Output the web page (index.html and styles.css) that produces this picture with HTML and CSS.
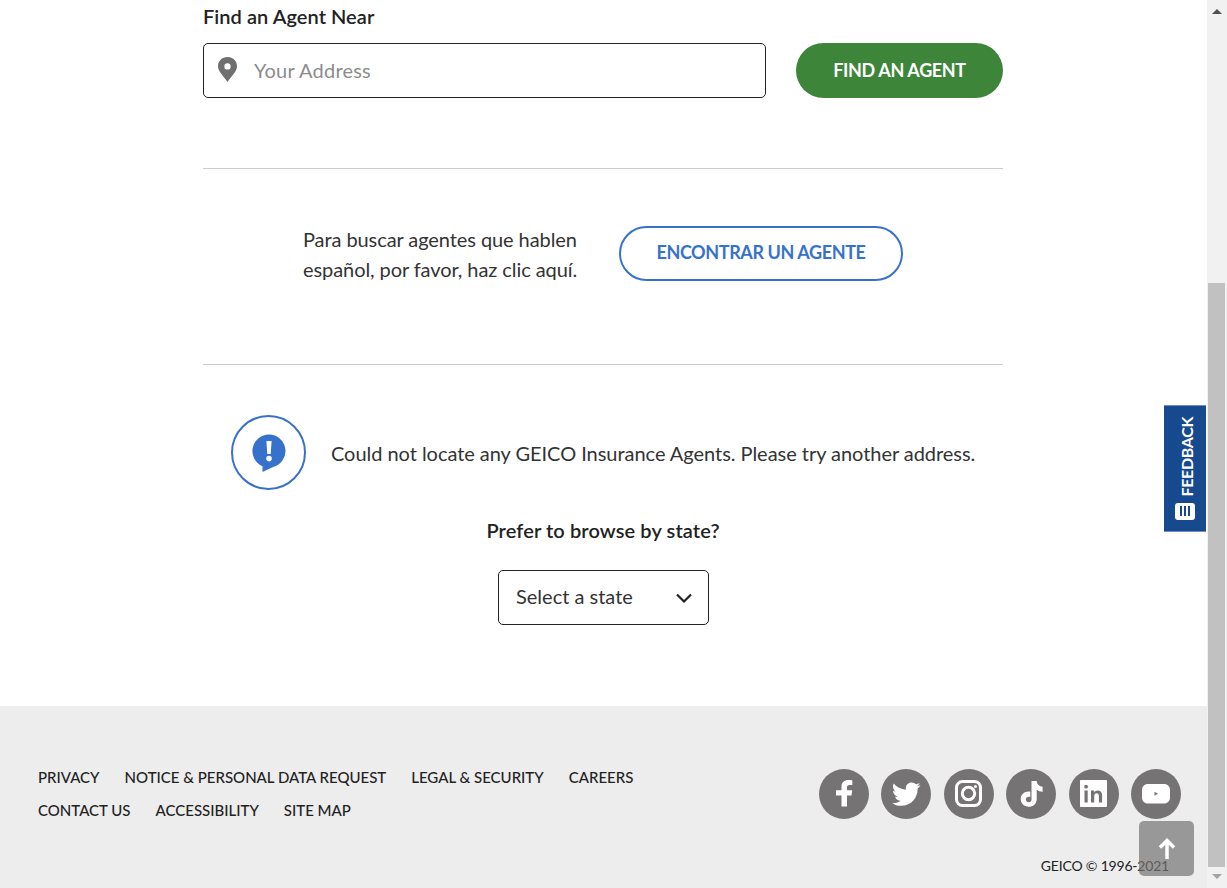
FILE: index.html
```html
<!DOCTYPE html>
<html lang="en">
<head>
    <meta charset="UTF-8">
    <meta name="viewport" content="width=device-width, initial-scale=1.0">
    <title>Find an Agent</title>
    <link rel="stylesheet" href="styles.css">
</head>
<body>

    <div class="page">
        <main class="content">
            <form class="search">
                <label class="search-label" for="address">Find an Agent Near</label>
                <div class="search-row">
                    <div class="address-box">
                        <svg class="pin" viewBox="1 0.5 18 23.5" width="19" height="25">
                            <path fill-rule="evenodd" fill="#6f6f6f" d="M10 0.5C4.700 0.500 1 4.400 1 9.200c0 5 5.300 9.300 9 14.800 3.700-5.500 9-9.800 9-14.800C19 4.400 15.300 0.500 10 0.500zM10 6.300a3 3 0 1 1 0 6 3 3 0 0 1 0-6z"/>
                        </svg>
                        <input class="address-input" type="text" id="address" placeholder="Your Address">
                    </div>
                    <button class="btn-green" type="button">FIND AN AGENT</button>
                </div>
            </form>

            <div class="spanish">
                <p class="spanish-text">Para buscar agentes que hablen<br>español, por favor, haz clic aquí.</p>
                <a class="btn-outline" href="#">ENCONTRAR UN AGENTE</a>
            </div>

            <div class="results">
                <div class="notice">
                    <span class="notice-icon">
                        <svg viewBox="0 0 34 38" width="34" height="38">
                            <path fill="#3672cc" d="M17 0.500a16.500 16.500 0 0 1 4 32.500L10.500 38V32.200A16.500 16.500 0 0 1 17 0.500z"/>
                            <path fill="#fff" d="M14.400 7h5.200l-0.900 13h-3.400zM17 21.800a2.800 2.800 0 1 1 0 5.600 2.800 2.800 0 0 1 0-5.600z"/>
                        </svg>
                    </span>
                    <p class="notice-text">Could not locate any GEICO Insurance Agents. Please try another address.</p>
                </div>
                <h3 class="browse-title">Prefer to browse by state?</h3>
                <div class="state-select">
                    <span class="state-value">Select a state</span>
                    <svg viewBox="0 0 16 10" width="16" height="10">
                        <path d="M1 1.500L8 8.500l7-7" fill="none" stroke="#222" stroke-width="2.200"/>
                    </svg>
                </div>
            </div>

            <footer class="footer">
                <nav class="footer-links">
                    <div class="link-row">
                        <a href="#">PRIVACY</a>
                        <a href="#">NOTICE &amp; PERSONAL DATA REQUEST</a>
                        <a href="#">LEGAL &amp; SECURITY</a>
                        <a href="#">CAREERS</a>
                    </div>
                    <div class="link-row">
                        <a href="#">CONTACT US</a>
                        <a href="#">ACCESSIBILITY</a>
                        <a href="#">SITE MAP</a>
                    </div>
                </nav>
                <div class="footer-side">
                    <div class="social">
                        <a class="social-icon" href="#">
                            <svg viewBox="0 0 50 50" width="50" height="50"><path fill="#fff" d="M28 37.500V26.500h4.500l0.700-5.200H28v-3c0-1.500 0.600-2.400 2.500-2.400h2.800v-4.600c-0.800-0.100-2.200-0.300-3.900-0.300-3.900 0-6.900 2.300-6.900 6.600v3.700H17v5.200h5.500v11z"/></svg>
                        </a>
                        <a class="social-icon" href="#">
                            <svg viewBox="0 0 24 24" width="30" height="30"><path fill="#fff" d="M23.500 4.900c-.8.400-1.800.6-2.700.8 1-.6 1.700-1.500 2.100-2.600-.9.500-1.900.9-3 1.100-.9-.9-2.100-1.500-3.400-1.500-2.600 0-4.700 2.100-4.700 4.700 0 .4 0 .7.100 1.100-3.900-.2-7.400-2.100-9.700-4.900-.4.700-.6 1.500-.6 2.400 0 1.600.8 3.100 2.100 3.900-.8 0-1.500-.2-2.100-.6v.1c0 2.300 1.600 4.200 3.800 4.600-.4.100-.8.200-1.200.2-.3 0-.6 0-.9-.1.600 1.900 2.300 3.200 4.400 3.300-1.600 1.300-3.600 2-5.800 2-.4 0-.8 0-1.100-.1 2.100 1.300 4.500 2.100 7.200 2.100 8.600 0 13.300-7.100 13.300-13.300v-.6c.9-.7 1.700-1.500 2.300-2.500z"/></svg>
                        </a>
                        <a class="social-icon" href="#">
                            <svg viewBox="0 0 50 50" width="50" height="50">
                                <rect x="12.500" y="12.500" width="24" height="24" rx="6" fill="none" stroke="#fff" stroke-width="3"/>
                                <circle cx="24.500" cy="24.500" r="6.200" fill="none" stroke="#fff" stroke-width="3"/>
                                <circle cx="31.500" cy="17.500" r="1.500" fill="#fff"/>
                            </svg>
                        </a>
                        <a class="social-icon" href="#">
                            <svg viewBox="0 0 50 50" width="50" height="50"><path fill="#fff" d="M25.500 12h5.100c.3 3.200 2.600 5.400 6 5.700v5c-2.300 0-4.300-.7-5.900-1.900v9.100c0 4.900-3.700 7.900-8 7.900-4.500 0-8-3.300-8-7.700 0-4.700 4.200-8.300 9.600-7.400v5.200c-2.500-.8-4.500.5-4.500 2.500 0 1.600 1.300 2.800 3 2.800 1.800 0 3.100-1.200 2.700-3.600z"/></svg>
                        </a>
                        <a class="social-icon" href="#">
                            <svg viewBox="0 0 50 50" width="50" height="50">
                                <path fill="#fff" fill-rule="evenodd" d="M12 11h25c.6 0 1 .4 1 1v25c0 .6-.4 1-1 1H12c-.6 0-1-.4-1-1V12c0-.6.400-1 1-1zM15.500 21.500v12h3.200v-12zM17.100 15.800a1.900 1.900 0 1 0 0 3.800 1.900 1.900 0 0 0 0-3.800zM22 21.500v12h3.200v-6.400c0-1.800 1-2.900 2.500-2.900s2.200 1 2.200 2.900v6.400h3.200v-7.200c0-3.100-1.700-4.900-4.200-4.900-1.700 0-2.900.7-3.700 2v-1.900z"/>
                            </svg>
                        </a>
                        <a class="social-icon" href="#">
                            <svg viewBox="0 0 50 50" width="50" height="50">
                                <path fill="#fff" fill-rule="evenodd" d="M17 15h16c3.600 0 6 2.400 6 6v7.500c0 3.600-2.400 6-6 6H17c-3.600 0-6-2.400-6-6V21c0-3.600 2.400-6 6-6zM23.500 22.800v4l3.500-2z"/>
                            </svg>
                        </a>
                    </div>
                    <p class="copyright">GEICO © 1996-2021</p>
                </div>
                <a class="back-top" href="#">
                    <svg viewBox="0 0 18 22" width="18" height="22">
                        <path d="M9 21V2.500M2 9.500l7-7 7 7" fill="none" stroke="#fff" stroke-width="3.500"/>
                    </svg>
                </a>
            </footer>

            <a class="feedback" href="#">
                <span class="feedback-label">FEEDBACK</span>
                <span class="feedback-icon"><i></i><i></i><i></i></span>
            </a>
        </main>

        <div class="scrollbar">
            <div class="scroll-up"></div>
            <div class="scroll-track"><div class="scroll-thumb"></div></div>
            <div class="scroll-down"></div>
        </div>
    </div>

</body>
</html>
```
FILE: styles.css
```css
html, body {
    margin: 0;
    padding: 0;
    height: 100%;
    overflow: hidden;
}
body {
    background-color: #fff;
    color: #333;
    font-family: Lato, 'Liberation Sans', sans-serif;
}
.page {
    display: flex;
    height: 888px;
}
.content {
    position: relative;
    flex: 1;
    display: flex;
    flex-direction: column;
}

/* search */
.search {
    width: 800px;
    height: 169px;
    box-sizing: border-box;
    margin-left: 203px;
    border-bottom: 1px solid #ccc;
    padding-top: 4px;
}
.search-label {
    display: block;
    font-size: 20px;
    font-weight: 600;
    line-height: 24px;
    letter-spacing: 0.05px;
    color: #222;
    margin-bottom: 15px;
}
.search-row {
    display: flex;
    justify-content: space-between;
}
.address-box {
    display: flex;
    align-items: center;
    width: 563px;
    height: 55px;
    box-sizing: border-box;
    border: 1px solid #222;
    border-radius: 5px;
    padding-left: 14px;
}
.pin {
    margin-right: 17px;
    margin-top: -2px;
}
.address-input {
    flex: 1;
    border: none;
    outline: none;
    padding: 0 0 2px;
    font-family: inherit;
    font-size: 20px;
    letter-spacing: 0.2px;
    color: #222;
}
.address-input::placeholder {
    color: #8c8c8c;
    opacity: 1;
}
.btn-green {
    width: 207px;
    height: 55px;
    border: none;
    border-radius: 28px;
    background-color: #3d8539;
    color: #fff;
    font-family: inherit;
    font-size: 18px;
    font-weight: 700;
    letter-spacing: -0.35px;
    padding: 0 0 2px;
    cursor: pointer;
}

/* spanish row */
.spanish {
    width: 800px;
    height: 196px;
    box-sizing: border-box;
    margin-left: 203px;
    border-bottom: 1px solid #ccc;
    display: flex;
    align-items: flex-start;
    padding: 57px 0 0 100px;
}
.spanish-text {
    width: 274px;
    margin: -2px 42px 0 0;
    font-size: 20px;
    line-height: 30px;
    letter-spacing: -0.08px;
    white-space: nowrap;
}
.btn-outline {
    display: flex;
    align-items: center;
    justify-content: center;
    width: 284px;
    height: 55px;
    box-sizing: border-box;
    border: 2px solid #3672cc;
    border-radius: 28px;
    padding-bottom: 4px;
    color: #3672cc;
    font-size: 18px;
    font-weight: 700;
    letter-spacing: -0.4px;
    text-decoration: none;
}

/* results */
.results {
    flex: 1;
    display: flex;
    flex-direction: column;
    align-items: center;
    padding-top: 50px;
    padding-right: 1px;
}
.notice {
    display: flex;
    align-items: center;
    width: 800px;
    box-sizing: border-box;
    padding-left: 28px;
}
.notice-icon {
    display: flex;
    align-items: center;
    justify-content: center;
    width: 75px;
    height: 75px;
    box-sizing: border-box;
    border: 2px solid #3672cc;
    border-radius: 50%;
    margin-right: 25px;
    flex-shrink: 0;
}
.notice-text {
    margin: 0;
    font-size: 20px;
    letter-spacing: -0.04px;
    white-space: nowrap;
}
.browse-title {
    margin: 25px 0 0;
    font-size: 20px;
    font-weight: 600;
    line-height: 30px;
    letter-spacing: 0.1px;
    color: #222;
}
.state-select {
    display: flex;
    align-items: center;
    justify-content: space-between;
    width: 211px;
    height: 55px;
    box-sizing: border-box;
    border: 1px solid #222;
    border-radius: 5px;
    padding: 0 16px 0 17px;
    margin-top: 25px;
    margin-left: 1px;
    font-size: 20px;
}
.state-value {
    margin-bottom: 3px;
}

/* footer */
.footer {
    position: relative;
    height: 182px;
    box-sizing: border-box;
    background-color: #ededed;
    display: flex;
    justify-content: space-between;
    padding: 54px 26px 0 38px;
}
.link-row {
    display: flex;
    gap: 25px;
    height: 33px;
    align-items: center;
}
.link-row a {
    color: #222;
    font-size: 15px;
    font-weight: 500;
    text-decoration: none;
}
.footer-side {
    display: flex;
    flex-direction: column;
    align-items: flex-end;
    padding-top: 9px;
}
.social {
    display: flex;
    gap: 12.4px;
}
.social-icon {
    display: flex;
    align-items: center;
    justify-content: center;
    width: 50px;
    height: 50px;
    border-radius: 50%;
    background-color: #757373;
}
.copyright {
    margin: 38px 12px 0 0;
    font-size: 14px;
    line-height: 18px;
    letter-spacing: -0.2px;
    color: #222;
}
.back-top {
    position: absolute;
    left: 1139px;
    top: 115px;
    width: 55px;
    height: 55px;
    border-radius: 5px;
    background-color: rgba(117, 115, 115, 0.7);
    display: flex;
    align-items: center;
    justify-content: center;
}

/* feedback tab */
.feedback {
    position: absolute;
    right: 1px;
    top: 405px;
    width: 42px;
    height: 127px;
    box-sizing: border-box;
    border-top: 1px solid #6d8fbd;
    border-bottom: 1px solid #6d8fbd;
    background-color: #17498f;
    display: flex;
    flex-direction: column;
    align-items: center;
    color: #fff;
    text-decoration: none;
}
.feedback-label {
    writing-mode: vertical-rl;
    transform: rotate(180deg);
    font-size: 16px;
    font-weight: 700;
    line-height: 20px;
    letter-spacing: -0.35px;
    margin: 11px 0 0 3px;
}
.feedback-icon {
    display: flex;
    justify-content: center;
    align-items: center;
    gap: 2px;
    width: 20px;
    height: 17px;
    margin-top: 6px;
    background-color: #fff;
    border-radius: 3px;
}
.feedback-icon i {
    display: block;
    width: 2px;
    height: 10px;
    background-color: #17498f;
}

/* scrollbar */
.scrollbar {
    width: 20px;
    background-color: #f1f1f1;
    display: flex;
    flex-direction: column;
}
.scroll-up, .scroll-down {
    display: flex;
    justify-content: center;
    box-sizing: border-box;
}
.scroll-up {
    height: 22px;
    padding-top: 9px;
}
.scroll-down {
    height: 21px;
    padding-top: 7px;
}
.scroll-down::after {
    content: "";
    height: 0;
    border-left: 5px solid transparent;
    border-right: 5px solid transparent;
    border-top: 5px solid #a3a3a3;
}
.scroll-up::after {
    content: "";
    height: 0;
    border-left: 5px solid transparent;
    border-right: 5px solid transparent;
    border-bottom: 5px solid #505050;
}
.scroll-track {
    flex: 1;
    display: flex;
    flex-direction: column;
    justify-content: flex-end;
    padding: 0 2px 0 1px;
}
.scroll-thumb {
    height: 584px;
    background-color: #c1c1c1;
}
```
